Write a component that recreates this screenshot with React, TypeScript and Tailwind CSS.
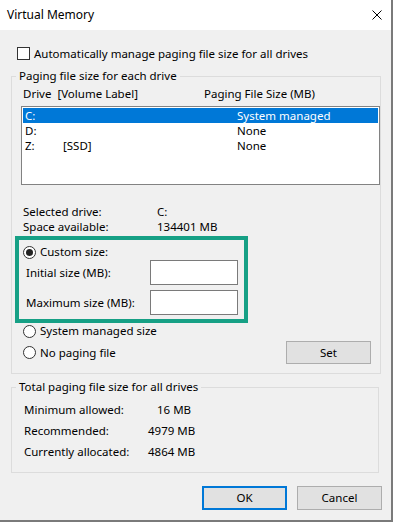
import React from "react";

function Radio({ checked }: { checked?: boolean }) {
  return (
    <span className="w-[13px] h-[13px] rounded-full border border-[#333] bg-white flex items-center justify-center shrink-0">
      {checked && <span className="w-[7px] h-[7px] rounded-full bg-[#222]" />}
    </span>
  );
}

export default function App() {
  const drives = [
    { letter: "C:", label: "", size: "System managed", selected: true },
    { letter: "D:", label: "", size: "None", selected: false },
    { letter: "Z:", label: "[SSD]", size: "None", selected: false },
  ];

  return (
    <div className="w-[393px] h-[522px] bg-[#f0f0f0] border-r-2 border-b-2 border-[#7a7a7a] text-[11.5px] leading-[14px] text-black font-['Noto_Sans',sans-serif] flex flex-col overflow-hidden">
      {/* title bar */}
      <div className="h-[30px] shrink-0 bg-white flex items-center justify-between pl-[7px] pr-[9px]">
        <span className="text-[12px]">Virtual Memory</span>
        <svg width="10" height="10" viewBox="0 0 10 10">
          <path d="M0.5 0.5 L9.5 9.5 M9.5 0.5 L0.5 9.5" stroke="#000" strokeWidth="1" fill="none" />
        </svg>
      </div>

      {/* auto manage */}
      <div className="mt-[17px] pl-[17px] h-[13px] flex items-center gap-[4px]">
        <span className="w-[13px] h-[13px] border border-[#333] bg-white shrink-0" />
        <span>Automatically manage paging file size for all drives</span>
      </div>

      {/* per drive group */}
      <fieldset className="mt-[8px] ml-[11px] w-[368px] border border-[#dcdcdc] pb-[9px]">
        <legend className="ml-[4px] px-[3px] leading-[16px]">Paging file size for each drive</legend>

        <div className="mt-[2px] h-[15px] flex items-center pl-[11px]">
          <span className="w-[181px] whitespace-pre">Drive  [Volume Label]</span>
          <span>Paging File Size (MB)</span>
        </div>

        <div className="mt-[5px] ml-[9px] w-[359px] h-[79px] border border-[#828282] bg-white p-[1px]">
          {drives.map((d) => (
            <div
              key={d.letter}
              className={`h-[15px] flex items-center pl-[2px] ${d.selected ? "bg-[#0078d7] text-white" : ""}`}
            >
              <span className="w-[38px]">{d.letter}</span>
              <span className="w-[174px]">{d.label}</span>
              <span>{d.size}</span>
            </div>
          ))}
        </div>

        <div className="mt-[19px] pl-[11px]">
          <div className="h-[15px] flex items-center">
            <span className="w-[134px]">Selected drive:</span>
            <span>C:</span>
          </div>
          <div className="h-[15px] flex items-center">
            <span className="w-[134px]">Space available:</span>
            <span>134401 MB</span>
          </div>
        </div>

        {/* highlighted custom size */}
        <div className="mt-[2px] ml-[3px] w-[233px] h-[87px] border-4 border-[#16a085] pt-[5px] pb-[4px]">
          <div className="h-[14px] pl-[4px] flex items-center gap-[4px]">
            <Radio checked />
            <span>Custom size:</span>
          </div>
          <div className="mt-[1px] h-[25px] flex items-center">
            <span className="w-[131px] pl-[7px]">Initial size (MB):</span>
            <span className="w-[88px] h-[25px] border border-[#7a7a7a] bg-white" />
          </div>
          <div className="mt-[5px] h-[25px] flex items-center">
            <span className="w-[131px] pl-[7px]">Maximum size (MB):</span>
            <span className="w-[88px] h-[25px] border border-[#7a7a7a] bg-white" />
          </div>
        </div>

        <div className="h-[16px] pl-[11px] flex items-center gap-[4px]">
          <Radio />
          <span>System managed size</span>
        </div>
        <div className="mt-[2px] h-[23px] pl-[11px] pr-[9px] flex items-center justify-between">
          <div className="flex items-center gap-[4px]">
            <Radio />
            <span>No paging file</span>
          </div>
          <button className="w-[85px] h-[23px] bg-[#e1e1e1] border border-[#adadad]">Set</button>
        </div>
      </fieldset>

      {/* totals group */}
      <fieldset className="mt-[5px] ml-[11px] w-[368px] border border-[#dcdcdc] pb-[10px]">
        <legend className="ml-[4px] px-[3px] leading-[16px]">Total paging file size for all drives</legend>
        <div className="mt-[4px] pl-[12px]">
          <div className="h-[21px] flex items-center">
            <span className="w-[133px]">Minimum allowed:</span>
            <span>16 MB</span>
          </div>
          <div className="h-[21px] flex items-center">
            <span className="w-[124px]">Recommended:</span>
            <span>4979 MB</span>
          </div>
          <div className="h-[21px] flex items-center">
            <span className="w-[124px]">Currently allocated:</span>
            <span>4864 MB</span>
          </div>
        </div>
      </fieldset>

      {/* dialog buttons */}
      <div className="mt-[13px] flex justify-end gap-[10px] pr-[9px]">
        <button className="w-[85px] h-[24px] bg-[#e1e1e1] border-2 border-[#0078d7]">OK</button>
        <button className="w-[85px] h-[24px] bg-[#e1e1e1] border border-[#adadad]">Cancel</button>
      </div>
    </div>
  );
}
